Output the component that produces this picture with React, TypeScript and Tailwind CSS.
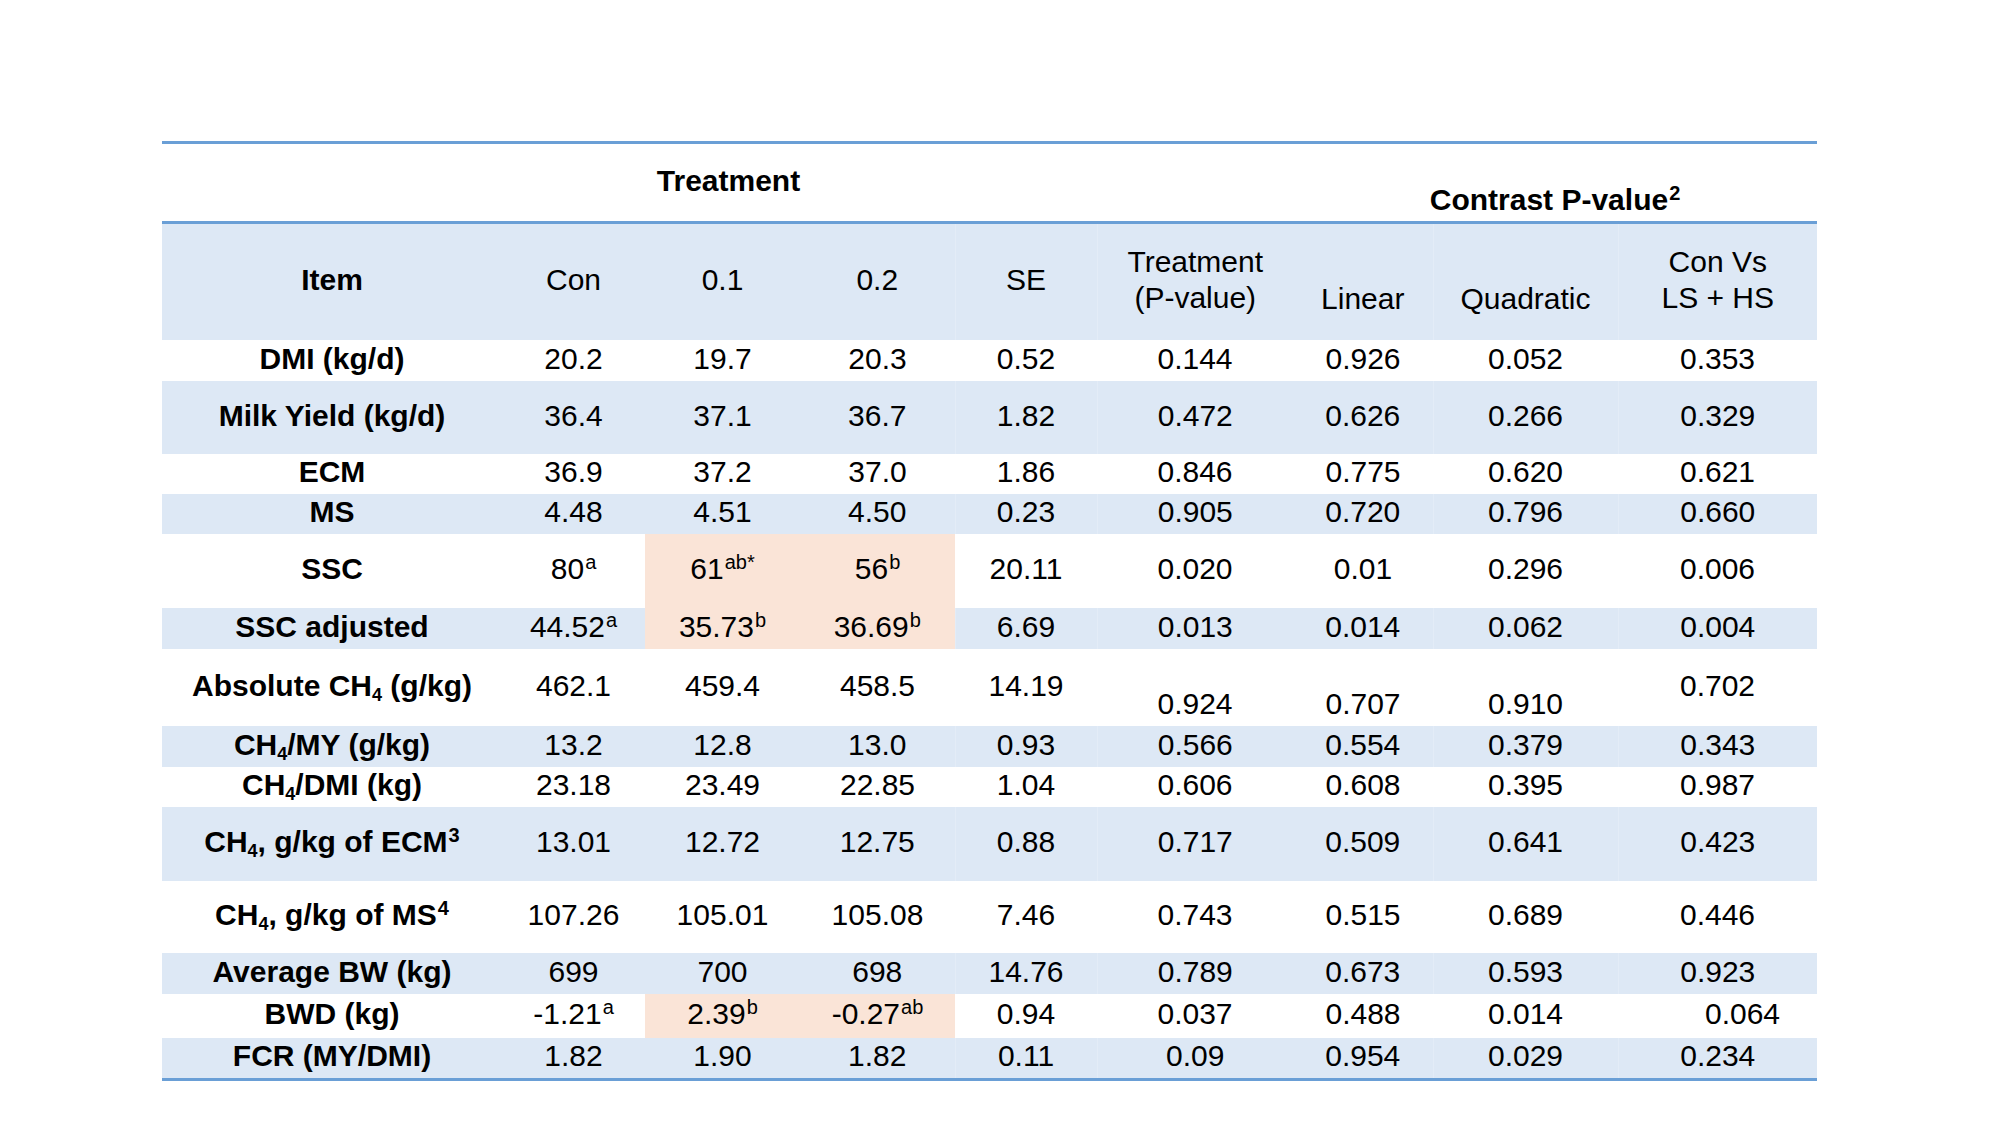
import type { ReactNode } from "react";

type Row = {
  item: ReactNode;
  values: ReactNode[];
  h: string;
  blue?: boolean;
  peach?: boolean;
  lowered?: number[];
  shifted?: number[];
};

const Sup = ({ children }: { children: ReactNode }) => (
  <sup className="text-[20px] top-[-0.5em] ml-[1px]">{children}</sup>
);

const CH4 = () => (
  <>
    CH<sub className="text-[18px] bottom-[-0.3em]">4</sub>
  </>
);

const rows: Row[] = [
  {
    item: "DMI (kg/d)",
    values: ["20.2", "19.7", "20.3", "0.52", "0.144", "0.926", "0.052", "0.353"],
    h: "h-[41px]",
  },
  {
    item: "Milk Yield (kg/d)",
    values: ["36.4", "37.1", "36.7", "1.82", "0.472", "0.626", "0.266", "0.329"],
    h: "h-[73px]",
    blue: true,
  },
  {
    item: "ECM",
    values: ["36.9", "37.2", "37.0", "1.86", "0.846", "0.775", "0.620", "0.621"],
    h: "h-[40px]",
  },
  {
    item: "MS",
    values: ["4.48", "4.51", "4.50", "0.23", "0.905", "0.720", "0.796", "0.660"],
    h: "h-[40px]",
    blue: true,
  },
  {
    item: "SSC",
    values: [
      <>80<Sup>a</Sup></>,
      <>61<Sup>ab*</Sup></>,
      <>56<Sup>b</Sup></>,
      "20.11",
      "0.020",
      "0.01",
      "0.296",
      "0.006",
    ],
    h: "h-[74px]",
    peach: true,
  },
  {
    item: "SSC adjusted",
    values: [
      <>44.52<Sup>a</Sup></>,
      <>35.73<Sup>b</Sup></>,
      <>36.69<Sup>b</Sup></>,
      "6.69",
      "0.013",
      "0.014",
      "0.062",
      "0.004",
    ],
    h: "h-[41px]",
    blue: true,
    peach: true,
  },
  {
    item: <>Absolute <CH4 /> (g/kg)</>,
    values: ["462.1", "459.4", "458.5", "14.19", "0.924", "0.707", "0.910", "0.702"],
    h: "h-[77px]",
    lowered: [4, 5, 6],
  },
  {
    item: <><CH4 />/MY (g/kg)</>,
    values: ["13.2", "12.8", "13.0", "0.93", "0.566", "0.554", "0.379", "0.343"],
    h: "h-[41px]",
    blue: true,
  },
  {
    item: <><CH4 />/DMI (kg)</>,
    values: ["23.18", "23.49", "22.85", "1.04", "0.606", "0.608", "0.395", "0.987"],
    h: "h-[40px]",
  },
  {
    item: <><CH4 />, g/kg of ECM<Sup>3</Sup></>,
    values: ["13.01", "12.72", "12.75", "0.88", "0.717", "0.509", "0.641", "0.423"],
    h: "h-[74px]",
    blue: true,
  },
  {
    item: <><CH4 />, g/kg of MS<Sup>4</Sup></>,
    values: ["107.26", "105.01", "105.08", "7.46", "0.743", "0.515", "0.689", "0.446"],
    h: "h-[72px]",
  },
  {
    item: "Average BW (kg)",
    values: ["699", "700", "698", "14.76", "0.789", "0.673", "0.593", "0.923"],
    h: "h-[41px]",
    blue: true,
  },
  {
    item: "BWD (kg)",
    values: [
      <>-1.21<Sup>a</Sup></>,
      <>2.39<Sup>b</Sup></>,
      <>-0.27<Sup>ab</Sup></>,
      "0.94",
      "0.037",
      "0.488",
      "0.014",
      "0.064",
    ],
    h: "h-[44px]",
    peach: true,
    shifted: [7],
  },
  {
    item: "FCR (MY/DMI)",
    values: ["1.82", "1.90", "1.82", "0.11", "0.09", "0.954", "0.029", "0.234"],
    h: "h-[42px]",
    blue: true,
  },
];

// faint separators inside the blue rows (column index, 0 = Item)
const sepCols = [4, 5, 7, 8];

export default function App() {
  return (
    <div className="w-[2000px] h-[1125px] bg-white text-black font-['Liberation_Sans',Arial,sans-serif] text-[30px] leading-[36px]">
      <div className="pt-[141px] pl-[162px]">
        <table className="w-[1655px] table-fixed border-collapse">
          <colgroup>
            <col className="w-[340px]" />
            <col className="w-[143px]" />
            <col className="w-[155px]" />
            <col className="w-[155px]" />
            <col className="w-[142px]" />
            <col className="w-[196px]" />
            <col className="w-[140px]" />
            <col className="w-[185px]" />
            <col className="w-[199px]" />
          </colgroup>
          <thead>
            <tr className="h-[80px] border-t-[3px] border-[#6a9fd6]">
              <th />
              <th colSpan={3} className="font-bold text-center align-middle pb-[4px]">
                Treatment
              </th>
              <th />
              <th />
              <th colSpan={3} className="font-bold text-center align-bottom pb-[3px]">
                Contrast P-value<Sup>2</Sup>
              </th>
            </tr>
            <tr className="h-[117px] bg-[#dde8f5] border-t-[3px] border-[#6a9fd6]">
              <th className="font-bold text-center align-middle pb-[4px]">Item</th>
              <th className="font-normal text-center align-middle pb-[4px]">Con</th>
              <th className="font-normal text-center align-middle pb-[4px]">0.1</th>
              <th className="font-normal text-center align-middle pb-[4px]">0.2</th>
              <th className="font-normal text-center align-middle pb-[4px] border-l border-[#e3ecf7]">SE</th>
              <th className="font-normal text-center align-middle pb-[4px] border-l border-[#e3ecf7]">
                Treatment
                <br />
                (P-value)
              </th>
              <th className="font-normal text-center align-middle pt-[34px]">Linear</th>
              <th className="font-normal text-center align-middle pt-[34px] border-l border-[#e3ecf7]">
                Quadratic
              </th>
              <th className="font-normal text-center align-middle pb-[4px] border-l border-[#e3ecf7]">
                Con Vs
                <br />
                LS + HS
              </th>
            </tr>
          </thead>
          <tbody>
            {rows.map((r, i) => (
              <tr
                key={i}
                className={
                  r.h +
                  (r.blue ? " bg-[#dde8f5]" : " bg-white") +
                  (i === rows.length - 1 ? " border-b-[3px] border-[#6a9fd6]" : "")
                }
              >
                <td className="font-bold text-center align-middle whitespace-nowrap pb-[3px]">{r.item}</td>
                {r.values.map((v, j) => (
                  <td
                    key={j}
                    className={
                      "text-center align-middle whitespace-nowrap pb-[3px] " +
                      (r.peach && (j === 1 || j === 2) ? "bg-[#fae4d7] " : "") +
                      (r.blue && sepCols.includes(j + 1) ? "border-l border-[#e3ecf7] " : "") +
                      (r.lowered?.includes(j) ? "pt-[36px] " : "") +
                      (r.shifted?.includes(j) ? "pl-[50px] " : "")
                    }
                  >
                    {v}
                  </td>
                ))}
              </tr>
            ))}
          </tbody>
        </table>
      </div>
    </div>
  );
}
